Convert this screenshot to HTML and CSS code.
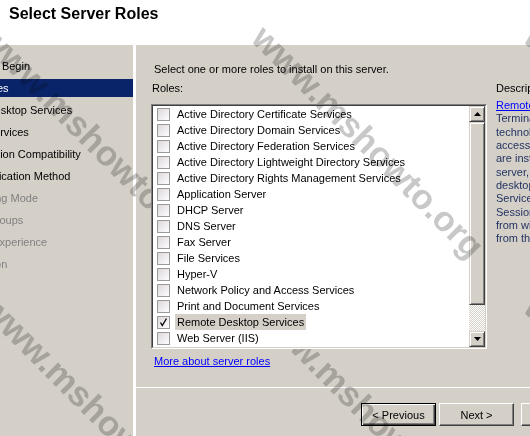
FILE: index.html
```html
<!DOCTYPE html>
<html>
<head>
<meta charset="utf-8">
<title>Select Server Roles</title>
<link rel="stylesheet" href="styles.css">
</head>
<body>
<div class="header">
  <h1 class="title">Select Server Roles</h1>
</div>
<div class="main">
  <ul class="nav">
    <li class="nav-item">Before You Begin</li>
    <li class="nav-item current">Server Roles</li>
    <li class="nav-item">Remote Desktop Services</li>
    <li class="nav-item sub">Role Services</li>
    <li class="nav-item sub">Application Compatibility</li>
    <li class="nav-item sub">Authentication Method</li>
    <li class="nav-item sub disabled">Licensing Mode</li>
    <li class="nav-item sub disabled">User Groups</li>
    <li class="nav-item sub disabled">Client Experience</li>
    <li class="nav-item disabled">Confirmation</li>
    <li class="nav-item disabled">Progress</li>
    <li class="nav-item disabled">Results</li>
  </ul>
  <div class="content">
    <div class="content-body">
      <p class="intro">Select one or more roles to install on this server.</p>
      <div class="columns">
        <div class="roles-col">
          <div class="label roles-label">Roles:</div>
          <div class="listbox">
            <div class="listbox-inner">
              <ul class="items">
                <li class="item"><span class="cb"></span><span class="item-label">Active Directory Certificate Services</span></li>
                <li class="item"><span class="cb"></span><span class="item-label">Active Directory Domain Services</span></li>
                <li class="item"><span class="cb"></span><span class="item-label">Active Directory Federation Services</span></li>
                <li class="item"><span class="cb"></span><span class="item-label">Active Directory Lightweight Directory Services</span></li>
                <li class="item"><span class="cb"></span><span class="item-label">Active Directory Rights Management Services</span></li>
                <li class="item"><span class="cb"></span><span class="item-label">Application Server</span></li>
                <li class="item"><span class="cb"></span><span class="item-label">DHCP Server</span></li>
                <li class="item"><span class="cb"></span><span class="item-label">DNS Server</span></li>
                <li class="item"><span class="cb"></span><span class="item-label">Fax Server</span></li>
                <li class="item"><span class="cb"></span><span class="item-label">File Services</span></li>
                <li class="item"><span class="cb"></span><span class="item-label">Hyper-V</span></li>
                <li class="item"><span class="cb"></span><span class="item-label">Network Policy and Access Services</span></li>
                <li class="item"><span class="cb"></span><span class="item-label">Print and Document Services</span></li>
                <li class="item"><span class="cb checked"><svg width="11" height="11" viewBox="0 0 11 11"><polyline points="2.5,5.5 4.3,8.5 8.5,1.5" fill="none" stroke="#000" stroke-width="1.3"/></svg></span><span class="item-label selected">Remote Desktop Services</span></li>
                <li class="item"><span class="cb"></span><span class="item-label">Web Server (IIS)</span></li>
                <li class="item"><span class="cb"></span><span class="item-label">Windows Deployment Services</span></li>
                <li class="item"><span class="cb"></span><span class="item-label">Windows Server Update Services</span></li>
              </ul>
              <div class="scrollbar">
                <div class="sb-btn"><svg width="7" height="4" viewBox="0 0 7 4"><polygon points="3.5,0 7,4 0,4" fill="#000"/></svg></div>
                <div class="sb-thumb"></div>
                <div class="sb-track"></div>
                <div class="sb-btn"><svg width="7" height="4" viewBox="0 0 7 4"><polygon points="0,0 7,0 3.5,4" fill="#000"/></svg></div>
              </div>
            </div>
            <span class="wm wm-list">www.mshowto.org</span>
          </div>
          <a class="link more-link" href="#">More about server roles</a>
        </div>
        <div class="desc-col">
          <div class="label">Description:</div>
          <div class="desc">
            <span class="desc-line"><a class="link" href="#">Remote Desktop Services</a></span>
            <span class="desc-line">Terminal Services provides</span>
            <span class="desc-line">technologies that enable users to</span>
            <span class="desc-line">access Windows-based programs that</span>
            <span class="desc-line">are installed on an RD Session Host</span>
            <span class="desc-line">server, or to access the full Windows</span>
            <span class="desc-line">desktop. With Remote Desktop</span>
            <span class="desc-line">Services, users can access an RD</span>
            <span class="desc-line">Session Host server</span>
            <span class="desc-line">from within your corporate network or</span>
            <span class="desc-line">from the Internet.</span>
          </div>
        </div>
      </div>
    </div>
    <div class="footer">
      <button class="btn default">&lt; Previous</button>
      <button class="btn">Next &gt;</button>
      <button class="btn spaced" disabled>Install</button>
    </div>
  </div>
</div>
<div class="watermarks">
  <span class="wm wm1">www.mshowto.org</span>
  <span class="wm wm2">www.mshowto.org</span>
  <span class="wm wm3">www.mshowto.org</span>
  <span class="wm wm4">www.mshowto.org</span>
  <span class="wm wm5">www.mshowto.org</span>
  <span class="wm wm6">www.mshowto.org</span>
</div>
</body>
</html>
```

FILE: styles.css
```css
html, body {
  margin: 0;
  padding: 0;
}
body {
  position: relative;
  width: 530px;
  height: 436px;
  overflow: hidden;
  background: #d4d0c8;
  font-family: "Liberation Sans", Arial, sans-serif;
  font-size: 11px;
  color: #000;
}
.header {
  height: 45px;
  box-sizing: border-box;
  background: #fff;
  padding: 4px 0 0 9px;
}
.title {
  margin: 0;
  font-size: 16px;
  font-weight: 700;
  line-height: 19px;
}
.main {
  display: flex;
  height: 391px;
}
.nav {
  flex: none;
  width: 133px;
  border-right: 3px solid #fff;
  margin: 0;
  padding: 12px 0 0 0;
  list-style: none;
  overflow: hidden;
  display: flex;
  flex-direction: column;
  gap: 4px;
}
.nav-item {
  flex: none;
  height: 18px;
  line-height: 18px;
  white-space: nowrap;
  margin-left: -55px;
}
.nav-item.sub {
  padding-left: 16px;
}
.nav-item.current {
  background: #0a246a;
  color: #fff;
}
.nav-item.disabled {
  color: #808080;
}
.content {
  flex: 1;
  min-width: 0;
  display: flex;
  flex-direction: column;
}
.content-body {
  height: 342px;
  box-sizing: border-box;
  padding: 18px 0 0 15px;
}
.intro {
  margin: 0;
  padding-left: 3px;
  line-height: 13px;
  white-space: nowrap;
}
.columns {
  display: flex;
  gap: 9px;
  margin-top: 6px;
}
.roles-col {
  flex: none;
  width: 336px;
  display: flex;
  flex-direction: column;
  align-items: flex-start;
}
.label {
  line-height: 13px;
  white-space: nowrap;
}
.roles-label {
  padding-left: 1px;
  margin-bottom: 9px;
}
.listbox {
  position: relative;
  z-index: 2;
  width: 336px;
  height: 245px;
  box-sizing: border-box;
  border: 1px solid;
  border-color: #808080 #fff #fff #808080;
  overflow: hidden;
}
.listbox-inner {
  height: 100%;
  box-sizing: border-box;
  border: 1px solid;
  border-color: #404040 #d4d0c8 #d4d0c8 #404040;
  background: #fff;
  display: flex;
  overflow: hidden;
}
.items {
  flex: 1;
  margin: 0;
  padding: 0;
  list-style: none;
  overflow: hidden;
}
.item {
  height: 16px;
  display: flex;
  align-items: center;
  white-space: nowrap;
}
.cb {
  flex: none;
  width: 13px;
  height: 13px;
  box-sizing: border-box;
  margin-left: 4px;
  border: 1px solid #9a9a9a;
  background: linear-gradient(135deg, #dcd6dc, #ffffff);
  display: flex;
  align-items: center;
  justify-content: center;
}
.item-label {
  margin-left: 5px;
  padding: 0 2px;
  height: 16px;
  line-height: 16px;
}
.item-label.selected {
  background: #d4d0c8;
}
.scrollbar {
  flex: none;
  width: 16px;
  display: flex;
  flex-direction: column;
}
.sb-btn, .sb-thumb {
  box-sizing: border-box;
  background: #d4d0c8;
  border: 1px solid;
  border-color: #d4d0c8 #404040 #404040 #d4d0c8;
  box-shadow: inset 1px 1px #fff, inset -1px -1px #808080;
}
.sb-btn {
  height: 16px;
  display: flex;
  align-items: center;
  justify-content: center;
}
.sb-thumb {
  height: 183px;
}
.sb-track {
  flex: 1;
  background-color: #fff;
  background-image: conic-gradient(#d4d0c8 25%, #fff 0 50%, #d4d0c8 0 75%, #fff 0);
  background-size: 2px 2px;
}
.link {
  color: #0000ff;
  text-decoration: underline;
}
.more-link {
  margin-top: 6px;
  margin-left: 3px;
  line-height: 13px;
  white-space: nowrap;
}
.desc-col {
  flex: none;
  width: 200px;
}
.desc {
  margin-top: 4px;
  color: #1f2f5f;
}
.desc-line {
  display: block;
  line-height: 13.33px;
  white-space: nowrap;
}
.footer {
  flex: 1;
  border-top: 1px solid #fff;
  display: flex;
  align-items: flex-start;
  gap: 3px;
  padding: 15px 0 0 225px;
}
.btn {
  flex: none;
  width: 75px;
  height: 23px;
  box-sizing: border-box;
  padding: 0;
  font-family: "Liberation Sans", Arial, sans-serif;
  font-size: 11px;
  color: #000;
  background: #d4d0c8;
  border: 1px solid;
  border-color: #fff #404040 #404040 #fff;
  box-shadow: inset -1px -1px #808080, inset 1px 1px #d4d0c8;
}
.btn.default {
  border-color: #000;
  box-shadow: inset 1px 1px #fff, inset -1px -1px #404040, inset -2px -2px #808080;
}
.btn.spaced {
  margin-left: 4px;
  color: #808080;
}
.watermarks {
  position: absolute;
  left: 0;
  top: 0;
  width: 530px;
  height: 436px;
  overflow: hidden;
  pointer-events: none;
  z-index: 1;
  mix-blend-mode: multiply;
}
.wm {
  position: absolute;
  font-family: "Liberation Sans", Arial, sans-serif;
  font-weight: 700;
  font-size: 35px;
  line-height: 1;
  color: #c8c8c8;
  white-space: nowrap;
  pointer-events: none;
  transform: translate(-50%, -50%) rotate(45deg);
}
.wm1 { left: 96px; top: 141px; }
.wm2 { left: 368px; top: 141px; }
.wm3 { left: 640px; top: 141px; }
.wm4 { left: 98px; top: 411px; }
.wm5 { left: 368px; top: 411px; }
.wm6 { left: 640px; top: 411px; }
.wm-list {
  left: 217px;
  top: 37px;
  mix-blend-mode: multiply;
}
```
